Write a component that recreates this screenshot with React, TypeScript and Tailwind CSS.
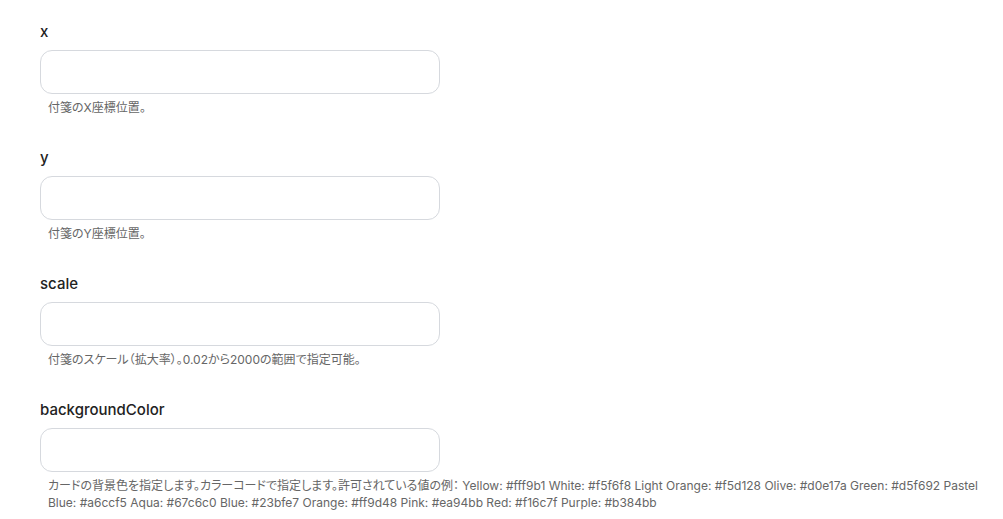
const FIELDS = [
  { name: "x", help: "付箋のX座標位置。" },
  { name: "y", help: "付箋のY座標位置。" },
  { name: "scale", help: "付箋のスケール（拡大率）。0.02から2000の範囲で指定可能。" },
  {
    name: "backgroundColor",
    help: "カードの背景色を指定します。カラーコードで指定します。許可されている値の例： Yellow: #fff9b1 White: #f5f6f8 Light Orange: #f5d128 Olive: #d0e17a Green: #d5f692 Pastel Blue: #a6ccf5 Aqua: #67c6c0 Blue: #23bfe7 Orange: #ff9d48 Pink: #ea94bb Red: #f16c7f Purple: #b384bb",
  },
];

export default function App() {
  return (
    <div
      className="min-h-screen bg-white pl-10 pr-4 pt-[23px]"
      style={{ fontFamily: 'Inter, "Noto Sans CJK JP", sans-serif' }}
    >
      <div className="flex flex-col gap-[33px]">
        {FIELDS.map((f) => (
          <div key={f.name} className="flex flex-col">
            <label className="text-[15px] leading-[18px] font-medium text-[#222]">{f.name}</label>
            <input
              type="text"
              className="mt-[9px] w-[400px] h-[44px] rounded-[12px] border border-[#d6d9de] bg-white px-3 outline-none"
            />
            <p className="mt-[5px] px-2 text-[12px] leading-[17px] text-[#666] [font-feature-settings:'palt']">{f.help}</p>
          </div>
        ))}
      </div>
    </div>
  );
}
